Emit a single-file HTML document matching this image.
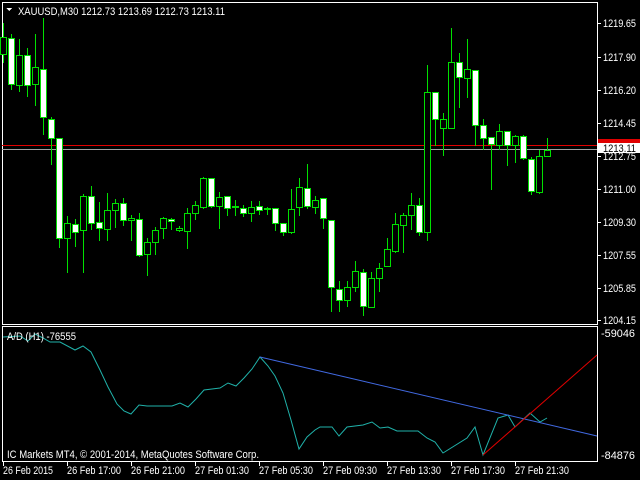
<!DOCTYPE html>
<html><head><meta charset="utf-8"><style>
html,body{margin:0;padding:0;background:#000;width:640px;height:480px;overflow:hidden}
svg{display:block}
text{font-family:"Liberation Sans",sans-serif;font-size:11px;fill:#fff}
</style></head><body>
<svg id="s" width="640" height="480" xmlns="http://www.w3.org/2000/svg" shape-rendering="crispEdges">
<rect x="2.5" y="2.5" width="595" height="322" fill="none" stroke="#fff"/>
<rect x="2.5" y="326.5" width="595" height="135" fill="none" stroke="#fff"/>
<line x1="2" y1="145.5" x2="597" y2="145.5" stroke="#e00000"/>
<line x1="2" y1="149.5" x2="597" y2="149.5" stroke="#a0a0a0"/>
<g id="c"></g>
<polygon points="6,8 12,8 9,11" fill="#fff"/>
<text x="18" y="15" textLength="207" lengthAdjust="spacingAndGlyphs">XAUUSD,M30  1212.73 1213.69 1212.73 1213.11</text>
<g stroke="#fff">
<line x1="597" y1="23.5" x2="601" y2="23.5"/><line x1="597" y1="57.5" x2="601" y2="57.5"/><line x1="597" y1="90.5" x2="601" y2="90.5"/><line x1="597" y1="123.5" x2="601" y2="123.5"/><line x1="597" y1="156.5" x2="601" y2="156.5"/><line x1="597" y1="189.5" x2="601" y2="189.5"/><line x1="597" y1="222.5" x2="601" y2="222.5"/><line x1="597" y1="255.5" x2="601" y2="255.5"/><line x1="597" y1="288.5" x2="601" y2="288.5"/><line x1="597" y1="320.5" x2="601" y2="320.5"/>
</g>
<g>
<text x="603" y="27" textLength="33" lengthAdjust="spacingAndGlyphs">1219.65</text><text x="603" y="61" textLength="33" lengthAdjust="spacingAndGlyphs">1217.90</text><text x="603" y="94" textLength="33" lengthAdjust="spacingAndGlyphs">1216.20</text><text x="603" y="127" textLength="33" lengthAdjust="spacingAndGlyphs">1214.45</text><text x="603" y="160" textLength="33" lengthAdjust="spacingAndGlyphs">1212.75</text><text x="603" y="193" textLength="33" lengthAdjust="spacingAndGlyphs">1211.00</text><text x="603" y="226" textLength="33" lengthAdjust="spacingAndGlyphs">1209.30</text><text x="603" y="259" textLength="33" lengthAdjust="spacingAndGlyphs">1207.55</text><text x="603" y="292" textLength="33" lengthAdjust="spacingAndGlyphs">1205.85</text><text x="603" y="324" textLength="33" lengthAdjust="spacingAndGlyphs">1204.15</text>
</g>
<rect x="598" y="139" width="42" height="5" fill="#e00000"/>
<rect x="598" y="143" width="42" height="10" fill="#fff"/>
<text x="603" y="152" style="fill:#000" textLength="33" lengthAdjust="spacingAndGlyphs">1213.11</text>
<text x="601" y="337" textLength="34" lengthAdjust="spacingAndGlyphs">-59046</text><text x="601" y="459" textLength="34" lengthAdjust="spacingAndGlyphs">-84876</text>
<polyline fill="none" stroke="#20b2aa" shape-rendering="auto" points="3,337 20,336 28,341 35,334 43,338 50,342 60,342 75,350 83,346 91,352 100,370 108,387 117,404 124,411 131,414 139,405 147,406 155,406 172,406 180,403 188,407 196,399 204,390 212,389 220,388 228,383 236,386 244,378 252,369 260,357 268,366 275,376 283,393 291,420 299,449 307,437 315,430 320,427 332,427 339,436 347,427 363,425 372,422 380,428 388,427 397,431 418,431 427,438 435,442 443,453 467,438 475,427 483,455 498,418 508,415 515,427 530,413 540,422 547,418"/>
<line x1="260" y1="357" x2="597" y2="436" stroke="#4169e1" shape-rendering="auto"/>
<line x1="483" y1="455" x2="597" y2="355" stroke="#e00000" shape-rendering="auto"/>
<text x="7" y="340" textLength="69" lengthAdjust="spacingAndGlyphs">A/D (H1) -76555</text>
<text x="7" y="458" textLength="252" lengthAdjust="spacingAndGlyphs">IC Markets MT4, © 2001-2014, MetaQuotes Software Corp.</text>
<g stroke="#fff"><line x1="3.5" y1="461" x2="3.5" y2="466"/><line x1="67.5" y1="461" x2="67.5" y2="466"/><line x1="131.5" y1="461" x2="131.5" y2="466"/><line x1="195.5" y1="461" x2="195.5" y2="466"/><line x1="259.5" y1="461" x2="259.5" y2="466"/><line x1="323.5" y1="461" x2="323.5" y2="466"/><line x1="387.5" y1="461" x2="387.5" y2="466"/><line x1="451.5" y1="461" x2="451.5" y2="466"/><line x1="515.5" y1="461" x2="515.5" y2="466"/></g>
<g>
<text x="3" y="474" textLength="50" lengthAdjust="spacingAndGlyphs">26 Feb 2015</text><text x="67" y="474" textLength="54" lengthAdjust="spacingAndGlyphs">26 Feb 17:00</text><text x="131" y="474" textLength="54" lengthAdjust="spacingAndGlyphs">26 Feb 21:00</text><text x="195" y="474" textLength="54" lengthAdjust="spacingAndGlyphs">27 Feb 01:30</text><text x="259" y="474" textLength="54" lengthAdjust="spacingAndGlyphs">27 Feb 05:30</text><text x="323" y="474" textLength="54" lengthAdjust="spacingAndGlyphs">27 Feb 09:30</text><text x="387" y="474" textLength="54" lengthAdjust="spacingAndGlyphs">27 Feb 13:30</text><text x="451" y="474" textLength="54" lengthAdjust="spacingAndGlyphs">27 Feb 17:30</text><text x="515" y="474" textLength="54" lengthAdjust="spacingAndGlyphs">27 Feb 21:30</text>
</g>
</svg>
<script>
var d=[[3,37,54,23,62,0],[11,38,84,34,89,1],[19,55,85,39,91,0],[27,55,85,48,96,1],[35,67,84,34,105,0],[43,69,117,18,134,1],[51,119,138,117,164,1],[59,138,238,138,247,1],[67,223,238,216,272,0],[75,224,232,219,246,1],[83,196,230,194,272,0],[91,196,223,186,229,1],[99,222,228,202,240,1],[107,210,229,193,240,0],[115,203,210,199,227,0],[123,203,220,198,225,1],[131,218,220,215,240,0],[139,219,255,213,256,1],[147,242,254,238,275,0],[155,230,242,227,254,0],[163,218,228,217,238,0],[171,219,221,218,229,1],[179,228,230,226,231,0],[187,213,231,208,248,0],[195,205,213,201,219,0],[203,178,207,177,208,0],[211,178,206,178,207,1],[219,197,206,192,228,0],[227,196,208,196,215,1],[235,206,207,200,215,0],[243,208,213,205,216,1],[251,207,213,201,221,0],[259,206,210,201,214,1],[267,208,209,207,214,0],[275,208,223,208,230,1],[283,223,232,223,235,1],[291,209,232,189,233,0],[299,187,207,178,215,0],[307,188,206,164,208,1],[315,200,207,196,213,0],[323,198,218,198,228,1],[331,220,287,220,311,1],[339,289,300,281,311,1],[347,287,300,281,306,0],[355,271,287,261,291,0],[363,272,306,269,315,1],[371,278,307,272,307,0],[379,268,278,263,291,0],[387,249,266,238,266,0],[395,224,251,213,252,0],[403,215,225,213,252,0],[411,205,215,193,229,0],[419,205,232,198,235,1],[427,92,232,65,240,0],[435,92,119,92,145,1],[443,119,128,113,155,0],[451,62,128,28,128,0],[459,62,77,53,107,1],[467,69,78,39,97,0],[475,70,125,70,145,1],[483,125,138,119,149,1],[491,137,144,137,189,1],[499,131,145,124,149,0],[507,131,145,131,165,1],[515,136,145,135,162,0],[523,136,158,135,159,1],[531,159,191,157,194,1],[539,156,192,150,193,0],[547,150,156,138,156,0]];
var g=document.getElementById('c'),h='';
d.forEach(function(c){var x=c[0];
h+='<line x1="'+(x+.5)+'" y1="'+c[3]+'" x2="'+(x+.5)+'" y2="'+(c[4]+1)+'" stroke="#00e000"/>';
h+='<rect x="'+(x-2.5)+'" y="'+(c[1]+.5)+'" width="6" height="'+Math.max(1,c[2]-c[1])+'" fill="'+(c[5]?'#fff':'#000')+'" stroke="#00e000"/>';});
g.innerHTML=h;
</script>
</body></html>
